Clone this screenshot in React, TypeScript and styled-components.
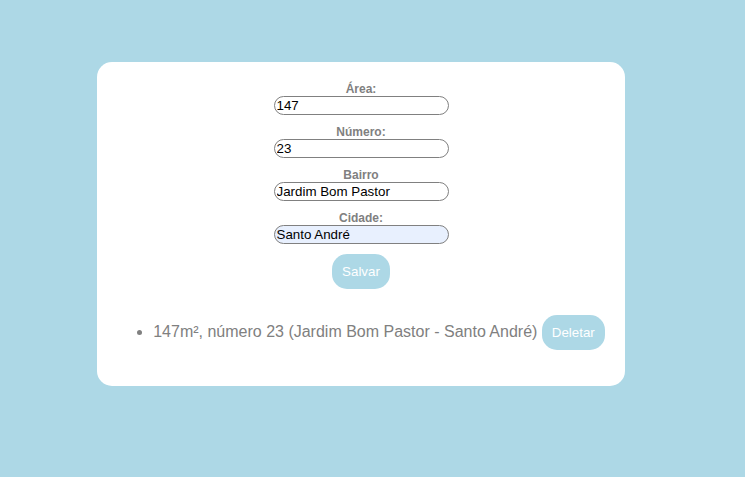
import React, { useState } from "react";
import styled, { createGlobalStyle } from "styled-components";

const GlobalStyle = createGlobalStyle`
  body {
    margin: 0;
    background: #add8e6;
    color: #808080;
    font-family: "Liberation Sans", Arial, sans-serif;
    font-size: 16px;
  }
`;

const Page = styled.main`
  display: flex;
  justify-content: center;
  padding: 62px 23px 62px 0;
`;

const Card = styled.section`
  padding: 20px;
  background: #ffffff;
  border-radius: 15px;
`;

const Form = styled.form`
  display: flex;
  flex-direction: column;
  align-items: center;
  gap: 10px;
`;

const Field = styled.div`
  display: flex;
  flex-direction: column;
  align-items: center;
`;

const Label = styled.label`
  font-size: 12px;
  line-height: 14px;
  font-weight: bold;
`;

const Input = styled.input<{ $filled?: boolean }>`
  box-sizing: border-box;
  width: 175px;
  height: 19px;
  padding: 1px 2px;
  border: 1px solid #808080;
  border-radius: 10px;
  background: ${(p) => (p.$filled ? "#e8f0fe" : "#ffffff")};
  color: #000000;
  font-family: inherit;
`;

const Button = styled.button`
  padding: 10px;
  border: none;
  border-radius: 15px;
  background: #add8e6;
  color: #ffffff;
  font-family: inherit;
  line-height: 15px;
  cursor: pointer;
`;

const List = styled.ul`
  margin: 26px 0 16px;
  padding-left: 36px;
`;

const fields = [
  { id: "area", label: "Área:", value: "147" },
  { id: "numero", label: "Número:", value: "23" },
  { id: "bairro", label: "Bairro", value: "Jardim Bom Pastor" },
  { id: "cidade", label: "Cidade:", value: "Santo André", filled: true },
];

export default function App() {
  const [values, setValues] = useState<Record<string, string>>(
    Object.fromEntries(fields.map((f) => [f.id, f.value]))
  );
  const [items, setItems] = useState(["147m², número 23 (Jardim Bom Pastor - Santo André)"]);

  const save = (e: React.FormEvent) => {
    e.preventDefault();
    const { area, numero, bairro, cidade } = values;
    setItems([...items, `${area}m², número ${numero} (${bairro} - ${cidade})`]);
  };

  return (
    <>
      <GlobalStyle />
      <Page>
        <Card>
          <Form onSubmit={save}>
            {fields.map((f) => (
              <Field key={f.id}>
                <Label htmlFor={f.id}>{f.label}</Label>
                <Input
                  id={f.id}
                  type="text"
                  $filled={f.filled}
                  value={values[f.id]}
                  onChange={(e) => setValues({ ...values, [f.id]: e.target.value })}
                />
              </Field>
            ))}
            <Button type="submit">Salvar</Button>
          </Form>
          <List>
            {items.map((item, i) => (
              <li key={i}>
                {item}{" "}
                <Button type="button" onClick={() => setItems(items.filter((_, n) => n !== i))}>
                  Deletar
                </Button>
              </li>
            ))}
          </List>
        </Card>
      </Page>
    </>
  );
}
